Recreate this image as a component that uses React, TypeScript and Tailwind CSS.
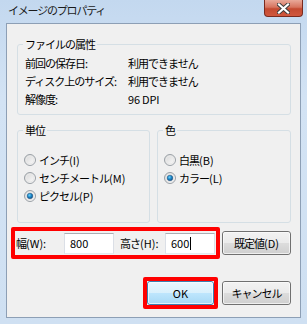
import React from "react";

const FONT = '"Noto Sans CJK JP", "Liberation Sans", sans-serif';

function Radio({ checked }: { checked?: boolean }) {
  return (
    <svg width="12" height="12" viewBox="0 0 12 12" className="shrink-0">
      <defs>
        <linearGradient id="rbg" x1="0" y1="0" x2="1" y2="1">
          <stop offset="0" stopColor="#d4d4d4" />
          <stop offset="1" stopColor="#ffffff" />
        </linearGradient>
        <radialGradient id="rdot" cx="0.4" cy="0.35" r="0.7">
          <stop offset="0" stopColor="#6ed2fb" />
          <stop offset="0.5" stopColor="#1b87c8" />
          <stop offset="1" stopColor="#134b80" />
        </radialGradient>
      </defs>
      <circle cx="6" cy="6" r="5.5" fill="url(#rbg)" stroke="#9aa0a6" strokeWidth="1" />
      <circle cx="6" cy="6" r="4" fill="none" stroke="#e8e8e8" strokeWidth="1" />
      {checked && <circle cx="6" cy="6" r="2.8" fill="url(#rdot)" stroke="#1a4f7d" strokeWidth="0.5" />}
    </svg>
  );
}

function L({ jp, en }: { jp: string; en: string }) {
  return (
    <span>
      {jp}
      <span className="tracking-[0px]">{en}</span>
    </span>
  );
}

function RadioRow({ jp, en, checked }: { jp: string; en: string; checked?: boolean }) {
  return (
    <div className="flex h-[18px] items-center gap-[3px]">
      <Radio checked={checked} />
      <L jp={jp} en={en} />
    </div>
  );
}

function Btn({ children, def, w }: { children: React.ReactNode; def?: boolean; w: string }) {
  return (
    <div
      className={
        "flex h-[24px] items-center justify-center rounded-[3px] border " +
        w +
        (def
          ? " border-[#3c7fb1] bg-[linear-gradient(#eaf6fd_0%,#d9f0fc_50%,#bee6fd_50%,#a7d9f5_100%)]"
          : " border-[#707070] bg-[linear-gradient(#f2f2f2_0%,#ebebeb_50%,#dddddd_50%,#cfcfcf_100%)]")
      }
    >
      <div className="flex h-full w-full items-center justify-center rounded-[2px] border border-[#fcfcfc]/70">
        {children}
      </div>
    </div>
  );
}

export default function App() {
  return (
    <div
      className="flex h-[324px] w-[307px] flex-col bg-[linear-gradient(#c3d8ef,#d3e3f4_30%,#cfe0f2)] text-[11px] leading-none tracking-[-1px] text-black"
      style={{ fontFamily: FONT }}
    >
      {/* title bar */}
      <div className="flex h-[23px] shrink-0 items-start justify-between">
        <span className="pl-[8px] pt-[5px] text-[11px] tracking-[-1.2px] text-[#1a1a1a]">イメージのプロパティ</span>
        <div className="mr-[4px] flex h-[17px] w-[39px] items-center justify-center rounded-b-[4px] border border-t-0 border-[#7a2a1e] bg-[linear-gradient(#e9a99a_0%,#d7745f_45%,#c44a31_55%,#d0583e_100%)]">
          <svg width="13" height="11" viewBox="0 0 13 11">
            <path d="M2 1.5 L11 9.5 M11 1.5 L2 9.5" stroke="#3b3b3b" strokeWidth="4" strokeLinecap="square" />
            <path d="M2 1.5 L11 9.5 M11 1.5 L2 9.5" stroke="#ffffff" strokeWidth="2.2" strokeLinecap="square" />
          </svg>
        </div>
      </div>

      {/* client area */}
      <div className="mx-[6px] flex h-[295px] shrink-0 flex-col border border-[#8d9fb5] bg-[#f0f0f0]">
        {/* file attributes */}
        <fieldset className="ml-[10px] mt-[12px] h-[79px] w-[274px] rounded-[3px] border border-[#d5dfe5] px-[7px]">
          <legend className="ml-[-2px] px-[2px] leading-[16px]">ファイルの属性</legend>
          <div className="pt-[2px]">
            <div className="flex h-[18px] items-center">
              <span className="w-[103px]">前回の保存日:</span>
              <span>利用できません</span>
            </div>
            <div className="flex h-[18px] items-center">
              <span className="w-[103px]">ディスク上のサイズ:</span>
              <span>利用できません</span>
            </div>
            <div className="flex h-[18px] items-center">
              <span className="w-[103px]">解像度:</span>
              <span className="tracking-[-0.2px]">96 DPI</span>
            </div>
          </div>
        </fieldset>

        {/* unit / color */}
        <div className="ml-[10px] mt-[7px] flex gap-[7px]">
          <fieldset className="h-[101px] w-[133px] rounded-[3px] border border-[#d5dfe5] px-[6px]">
            <legend className="ml-[-1px] px-[2px] leading-[16px]">単位</legend>
            <div className="pt-[13px]">
              <RadioRow jp="インチ" en="(I)" />
              <RadioRow jp="センチメートル" en="(M)" />
              <RadioRow jp="ピクセル" en="(P)" checked />
            </div>
          </fieldset>
          <fieldset className="h-[101px] w-[134px] rounded-[3px] border border-[#d5dfe5] px-[6px]">
            <legend className="ml-[-1px] px-[2px] leading-[16px]">色</legend>
            <div className="pt-[13px]">
              <RadioRow jp="白黒" en="(B)" />
              <RadioRow jp="カラー" en="(L)" checked />
            </div>
          </fieldset>
        </div>

        {/* size row */}
        <div className="ml-[4px] mt-[4px] flex items-center">
          <div className="flex h-[32px] w-[209px] items-center rounded-[2px] border-[4px] border-[#ff0000] pl-[1px]">
            <span className="w-[48px]">
              <L jp="幅" en="(W):" />
            </span>
            <div className="flex h-[21px] w-[50px] items-center border border-[#abadb3] border-b-[#e3e9ef] border-x-[#dbdfe6] bg-white pl-[5px] tracking-[0px]">
              800
            </div>
            <span className="ml-[6px] w-[45px]">
              <L jp="高さ" en="(H):" />
            </span>
            <div className="flex h-[21px] w-[50px] items-center border border-[#abadb3] border-b-[#e3e9ef] border-x-[#dbdfe6] bg-white pl-[5px] tracking-[0px]">
              600
              <span className="ml-[1px] inline-block h-[13px] w-[1px] bg-black" />
            </div>
          </div>
          <div className="ml-[2px]">
            <Btn w="w-[69px]">
              <L jp="既定値" en="(D)" />
            </Btn>
          </div>
        </div>

        {/* buttons row */}
        <div className="mr-[9px] mt-[18px] flex justify-end gap-[4px]">
          <div className="flex h-[32px] w-[75px] items-center rounded-[2px] border-[4px] border-[#ff0000]">
            <Btn def w="w-[67px]">
              <span className="tracking-[0px]">OK</span>
            </Btn>
          </div>
          <div className="pt-[4px]">
            <Btn w="w-[69px]">キャンセル</Btn>
          </div>
        </div>
      </div>
    </div>
  );
}
